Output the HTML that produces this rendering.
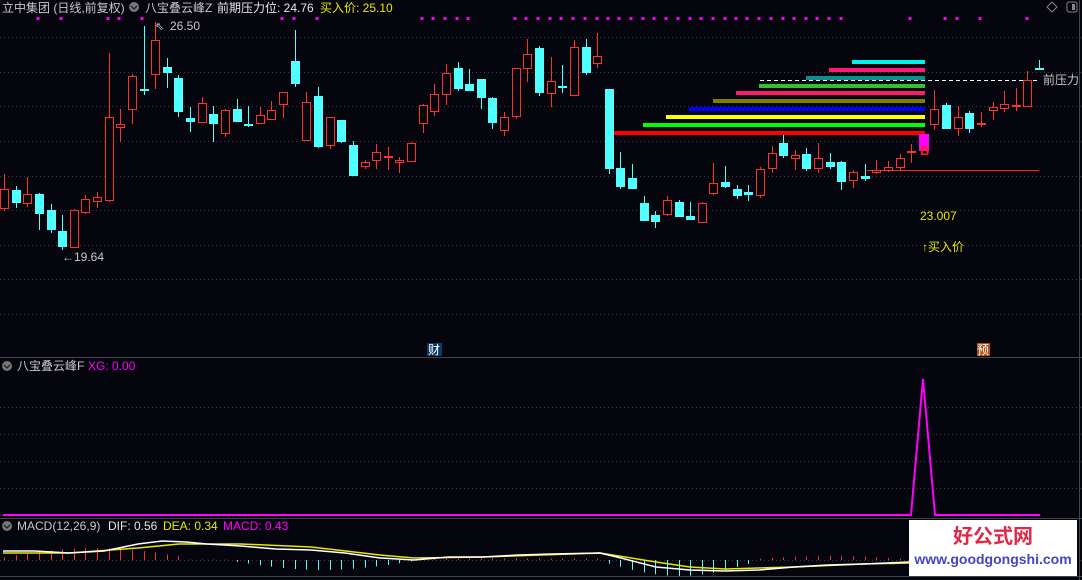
<!DOCTYPE html>
<html><head><meta charset="utf-8">
<style>
html,body{margin:0;padding:0;background:#05050d;}
svg{display:block;font-family:"Liberation Sans","Noto Sans CJK SC",sans-serif;}
</style></head><body>
<svg id="s" width="1082" height="580" viewBox="0 0 1082 580" xmlns="http://www.w3.org/2000/svg">
<rect width="1082" height="580" fill="#05050d"/>
<g stroke="#3a3a44" stroke-dasharray="1 3" stroke-width="1">
<line x1="0" y1="37.5" x2="1082" y2="37.5"/><line x1="0" y1="72.5" x2="1082" y2="72.5"/>
<line x1="0" y1="106.5" x2="1082" y2="106.5"/><line x1="0" y1="141.5" x2="1082" y2="141.5"/>
<line x1="0" y1="176.5" x2="1082" y2="176.5"/><line x1="0" y1="210.5" x2="1082" y2="210.5"/>
<line x1="0" y1="245.5" x2="1082" y2="245.5"/><line x1="0" y1="279.5" x2="1082" y2="279.5"/>
<line x1="0" y1="314.5" x2="1082" y2="314.5"/>
<line x1="0" y1="407.5" x2="1082" y2="407.5"/><line x1="0" y1="434.5" x2="1082" y2="434.5"/>
<line x1="0" y1="461.5" x2="1082" y2="461.5"/><line x1="0" y1="488.5" x2="1082" y2="488.5"/>
<line x1="0" y1="560.5" x2="1082" y2="560.5"/>
</g>
<line x1="0" y1="357.5" x2="1082" y2="357.5" stroke="#44444c"/>
<line x1="0" y1="518.5" x2="1082" y2="518.5" stroke="#44444c"/>
<line x1="0" y1="576.5" x2="1082" y2="576.5" stroke="#44444c"/>
<line x1="1079.5" y1="0" x2="1079.5" y2="580" stroke="#44444c"/>
<text x="2" y="12" font-size="12" fill="#c8c8c8">立中集团 (日线,前复权)</text>
<circle cx="134" cy="7" r="5" fill="#777"/><path d="M131 6l3 3 3-3" stroke="#222" fill="none" stroke-width="1.3"/>
<text x="145" y="12" font-size="12" fill="#c8c8c8">八宝叠云峰Z</text>
<text x="217" y="12" font-size="12" fill="#e6e6e6">前期压力位: 24.76</text>
<text x="320" y="12" font-size="12" fill="#e8e800">买入价: 25.10</text>
<path d="M1052 2l5 5-5 5-5-5z" stroke="#888" fill="none"/>
<rect x="1067" y="2" width="10" height="10" rx="2" stroke="#888" fill="none"/><rect x="1072" y="4" width="3" height="6" fill="#888"/>
<g id="dots" fill="#ff00ff"></g>
<g id="lines"></g>
<g id="candles"></g>
<text x="155" y="30" font-size="11" fill="#c8c8c8">⇖</text>
<text x="170" y="30" font-size="12" fill="#c8c8c8">26.50</text>
<text x="62" y="261" font-size="12" fill="#c8c8c8">←19.64</text>
<text x="1043" y="84" font-size="12" fill="#c8c8c8">前压力</text>
<text x="920" y="220" font-size="12" fill="#e8e800">23.007</text>
<text x="922" y="251" font-size="12" fill="#e8e800">↑买入价</text>
<rect x="427" y="343" width="15" height="13" fill="#0c3a6a"/><text x="428" y="354" font-size="12" fill="#fff">财</text>
<rect x="977" y="343" width="13" height="13" fill="#b05010"/><text x="977" y="354" font-size="12" fill="#fff">预</text>
<circle cx="7" cy="366" r="5" fill="#777"/><path d="M4 365l3 3 3-3" stroke="#222" fill="none" stroke-width="1.3"/>
<text x="17" y="370" font-size="12" fill="#c8c8c8">八宝叠云峰F</text>
<text x="88" y="370" font-size="12" fill="#ff00ff">XG: 0.00</text>
<polyline points="3,515 911,515 923,379 935,515 1040,515" fill="none" stroke="#ff00ff" stroke-width="2"/>
<circle cx="7" cy="526" r="5" fill="#777"/><path d="M4 525l3 3 3-3" stroke="#222" fill="none" stroke-width="1.3"/>
<text x="17" y="530" font-size="12" fill="#c8c8c8">MACD(12,26,9)</text>
<text x="108" y="530" font-size="12" fill="#e6e6e6">DIF: 0.56</text>
<text x="163" y="530" font-size="12" fill="#e8e800">DEA: 0.34</text>
<text x="223" y="530" font-size="12" fill="#ff00ff">MACD: 0.43</text>
<g id="hist"></g>
<polyline fill="none" stroke="#e8e800" stroke-width="1.5" points="3,553 69,553 138,548 179,544 241,544 311,547 380,555 414,558 483,557 600,553 656,562 690,567 725,569 794,567 863,564 910,563"/>
<polyline fill="none" stroke="#ffffff" stroke-width="1.5" points="3,551 35,551 69,553 104,551 138,544 162,541 186,542 207,544 241,546 276,549 311,550 345,553 380,558 414,560 449,557 483,557 518,555 552,554 600,553 621,558 656,567 690,570 725,571 759,570 794,567 828,565 863,564 910,562"/>
<rect x="909" y="520" width="168" height="56" fill="#fff"/>
<text x="993" y="543" font-size="20" font-weight="bold" fill="#e0284a" text-anchor="middle">好公式网</text>
<text x="993" y="564" font-size="14" font-weight="bold" fill="#4545c0" text-anchor="middle">www.goodgongshi.com</text>
</svg>
<script>
var NS="http://www.w3.org/2000/svg";
function el(p,t,a){var e=document.createElementNS(NS,t);for(var k in a)e.setAttribute(k,a[k]);document.getElementById(p).appendChild(e);return e;}
var dx=[38,61,108,119,142,282,294,317,422,433,445,457,468,515,526,538,550,561,573,585,597,608,619,631,643,654,666,678,690,701,713,725,736,747,759,771,783,794,806,817,829,841,910,945,957,980,1027];
dx.forEach(function(x){el("dots","rect",{x:x-1.5,y:17,width:3,height:3});});
var C=[["r",189,208,174,211],["c",190,202,186,208],["r",194,203,177,207],["c",194,213,193,230],["c",210,229,204,233],["c",231,246,215,250],["r",210,247,209,248],["r",199,212,195,214],["r",197,201,192,208],["r",117,200,53,202],
["r",124,127,109,142],["r",76,109,74,124],["c",89,90,26,95],["r",40,74,22,89],["c",67,72,58,88],["c",78,111,75,117],["c",118,121,107,132],["r",103,122,97,122],["c",114,123,106,142],["r",110,133,109,137],
["c",109,121,99,122],["c",124,125,106,127],["r",115,123,107,123],["r",110,119,101,119],["r",92,104,92,118],["c",61,83,30,87],["r",102,140,92,141],["c",96,146,87,148],["r",117,145,117,149],["c",120,141,120,143],
["c",145,175,141,176],["r",162,166,160,169],["r",152,160,144,169],["r",156,157,147,170],["r",160,162,157,173],["r",143,161,142,162],["r",105,123,104,133],["r",94,111,84,116],["r",73,94,64,105],["c",68,88,62,91],
["c",84,90,69,91],["c",79,97,79,109],["c",98,122,97,129],["r",117,130,112,136],["r",68,116,68,119],["r",54,68,39,82],["c",48,92,46,96],
["r",81,93,57,107],["c",86,87,65,93],["r",47,95,40,95],["c",47,72,39,75],["r",56,63,33,68],["c",89,168,89,174],["c",168,186,152,189],["c",178,188,164,188],["c",203,220,196,220],["c",215,221,211,228],
["r",200,214,196,216],["c",202,216,200,217],["c",216,219,202,220],["r",203,222,202,223],["r",183,193,163,195],["c",182,186,166,188],["c",189,195,185,199],["c",192,194,185,201],["r",169,195,167,198],["r",153,168,146,173],
["c",143,155,135,158],["r",155,158,150,170],["c",154,168,148,171],["r",158,168,143,173],["c",162,166,153,169],["c",162,181,161,190],["r",172,180,170,188],["c",176,178,164,181],["r",170,172,160,174],["r",167,170,161,172],
["r",158,167,154,170],["r",151,152,144,163],["m",134,150,134,150],["r",109,124,90,130],["c",105,128,103,128],["r",117,128,106,136],["c",113,128,111,133],["r",123,124,112,127],["r",107,110,102,120],["r",104,108,91,112],
["r",105,106,88,111],["r",80,106,71,107],["c",68,69,60,70]];
var L=[["#00f0f0",852,62],["#ff1a7a",829,70],["#118c8c",806,78],["#33c033",759,86],["#ff1a6a",736,93],["#808000",713,101],["#0000ff",689,109],["#ffff00",666,117],["#00ff00",643,125],["#ff0000",608,133]];
L.forEach(function(l){el("lines","rect",{x:l[1],y:l[2]-2,width:925-l[1],height:4,fill:l[0]});});
el("lines","line",{x1:760,y1:80.5,x2:1040,y2:80.5,stroke:"#fff","stroke-dasharray":"4 3"});
el("lines","line",{x1:867,y1:170.5,x2:1039,y2:170.5,stroke:"#ff2020"});
C.forEach(function(c,i){
 var x=Math.round(4+i*11.63);
 if(c[0]=="m"){el("candles","rect",{x:x-4,y:134,width:10,height:17,fill:"#ff00ff"});
   var t=el("candles","text",{x:x-3,y:155,"font-size":"13","font-weight":"bold",fill:"#ff2020"});t.textContent="B";return;}
 var col=c[0]=="r"?"#ff3030":"#50ffff";
 el("candles","line",{x1:x+0.5,y1:c[3],x2:x+0.5,y2:c[4],stroke:col});
 var h=Math.max(1,c[2]-c[1]);
 if(c[0]=="r") el("candles","rect",{x:x-3.5,y:c[1]+0.5,width:8,height:h,fill:"#05050d",stroke:col});
 else el("candles","rect",{x:x-4,y:c[1],width:9,height:h+1,fill:col});
});
for(var i=0;i<90;i++){var x=Math.round(4+i*11.63)+0.5;if(x>905)break;var v;
 if(x<190) v=Math.sin(x/190*Math.PI)*10+2;
 else if(x<232) v=0.5;
 else if(x<414) v=-(Math.sin((x-232)/182*Math.PI)*9+1);
 else if(x<604) v=1.5;
 else if(x<755) v=-(Math.sin((x-604)/151*Math.PI)*14+2);
 else v=Math.sin((x-755)/150*Math.PI)*3+1;
 el("hist","line",{x1:x,y1:560,x2:x,y2:560-v,stroke:v>0?"#ff3030":"#50ffff"});
}
</script>
</body></html>
